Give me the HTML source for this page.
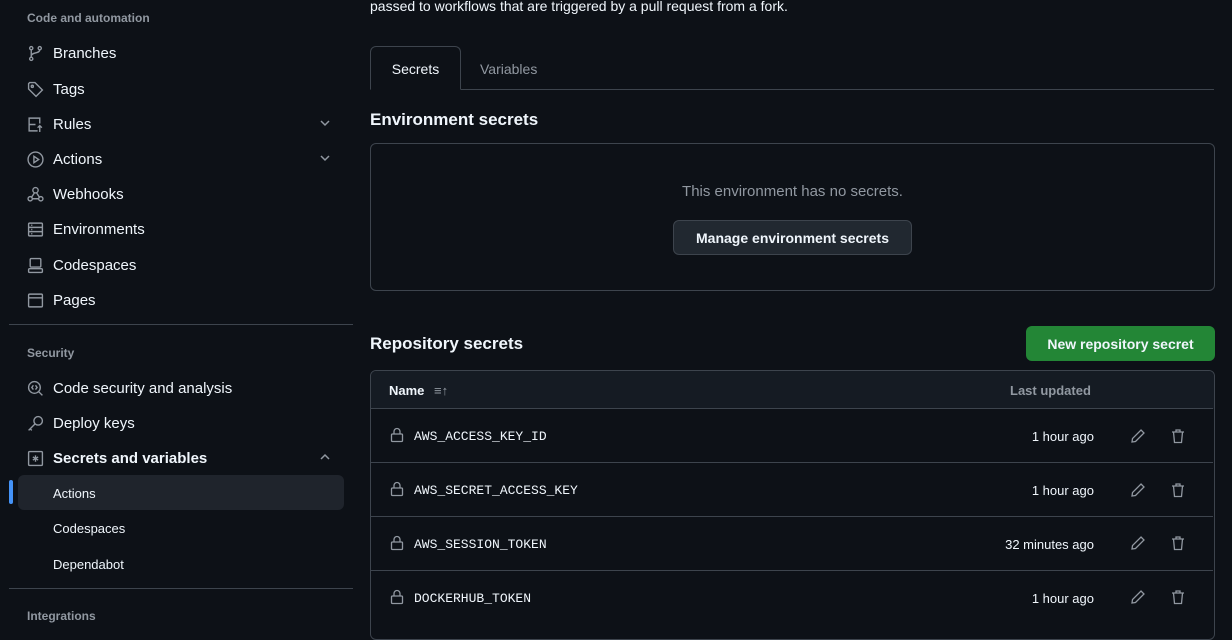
<!DOCTYPE html>
<html><head><style>
*{box-sizing:border-box;margin:0;padding:0}
body{width:1232px;height:635px;overflow:hidden;background:#0d1117;color:#f0f6fc;font-family:"Liberation Sans",sans-serif;font-size:14px;position:relative}
.a{position:absolute}
.h{color:#9198a1;font-size:12px;font-weight:bold}
.it{position:absolute;left:27px;display:flex;align-items:center;font-size:15px;color:#f0f6fc}
.it svg{width:17px;height:17px;flex-shrink:0;margin-right:9px;stroke:#9198a1;fill:none;stroke-width:1.3}
.sub{position:absolute;left:53px;font-size:13px}
.chev{position:absolute;left:318px;width:14px;height:14px;stroke:#9198a1;fill:none;stroke-width:1.5}
.row{position:absolute;left:371px;width:842px;height:54px;border-top:1px solid #3d444d;display:flex;align-items:center;padding-top:2px}
.mono{font-family:"Liberation Mono",monospace;font-size:13px;margin-left:8px}
.time{position:absolute;right:119px;font-size:13px}
.ico{position:absolute;width:16px;height:16px;stroke:#9198a1;fill:none;stroke-width:1.3}
</style></head><body>
<div class="a h" style="left:27px;top:11px">Code and automation</div>
<div class="it" style="top:45px"><svg viewBox="0 0 16 16"><circle cx="4" cy="3" r="1.5"/><circle cx="4" cy="13" r="1.5"/><circle cx="12" cy="3" r="1.5"/><path d="M4 4.5v7M12 4.5c0 4-8 2-8 6"/></svg>Branches</div>
<div class="it" style="top:81px"><svg viewBox="0 0 16 16"><path d="M1.5 2.5v5l7 7 6-6-7-7h-5z"/><circle cx="5" cy="5" r="1"/></svg>Tags</div>
<div class="it" style="top:116px"><svg viewBox="0 0 16 16"><path d="M10 14H2V2h10v5M2 8h6M12 15V9M10 11l2-2 2 2"/></svg>Rules</div>
<svg class="chev" style="top:116px" viewBox="0 0 14 14"><path d="M3 5l4 4 4-4"/></svg>
<div class="it" style="top:151px"><svg viewBox="0 0 16 16"><circle cx="8" cy="8" r="7"/><path d="M6.5 5v6l4.5-3z"/></svg>Actions</div>
<svg class="chev" style="top:151px" viewBox="0 0 14 14"><path d="M3 5l4 4 4-4"/></svg>
<div class="it" style="top:186px"><svg viewBox="0 0 16 16"><circle cx="8" cy="4" r="2.5"/><circle cx="3" cy="12" r="2"/><circle cx="13" cy="12" r="2"/><path d="M7 6.5L4 11M9 6.5L12 11M5 12h6"/></svg>Webhooks</div>
<div class="it" style="top:221px"><svg viewBox="0 0 16 16"><rect x="1.5" y="2" width="13" height="12" rx="1"/><path d="M1.5 6h13M1.5 10h13M4 4h1M4 8h1M4 12h1"/></svg>Environments</div>
<div class="it" style="top:257px"><svg viewBox="0 0 16 16"><rect x="3" y="1.5" width="10" height="8" rx="1"/><rect x="1.5" y="11" width="13" height="3.5" rx="1"/></svg>Codespaces</div>
<div class="it" style="top:292px"><svg viewBox="0 0 16 16"><rect x="1.5" y="2" width="13" height="12" rx="1"/><path d="M1.5 5.5h13"/></svg>Pages</div>
<div class="a" style="left:9px;top:324px;width:344px;height:1px;background:#3d444d"></div>
<div class="a h" style="left:27px;top:346px">Security</div>
<div class="it" style="top:380px"><svg viewBox="0 0 16 16"><circle cx="7" cy="7" r="5.5"/><path d="M11 11l3.5 3.5M6 5L4.5 7 6 9M8 5l1.5 2L8 9"/></svg>Code security and analysis</div>
<div class="it" style="top:415px"><svg viewBox="0 0 16 16"><circle cx="10.5" cy="5.5" r="4"/><path d="M7.5 8.5l-6 6M3 13l1.5 1.5"/></svg>Deploy keys</div>
<div class="it" style="top:450px;font-weight:bold"><svg viewBox="0 0 16 16"><rect x="1.5" y="1.5" width="13" height="13" rx="1"/><path d="M8 5v6M5.5 6.5l5 3M10.5 6.5l-5 3"/></svg>Secrets and variables</div>
<svg class="chev" style="top:450px" viewBox="0 0 14 14"><path d="M3 9l4-4 4 4"/></svg>
<div class="a" style="left:18px;top:475px;width:326px;height:35px;background:#1f242c;border-radius:6px"></div>
<div class="a" style="left:9px;top:480px;width:4px;height:24px;background:#4493f8;border-radius:3px"></div>
<div class="sub" style="top:486px">Actions</div>
<div class="sub" style="top:521px">Codespaces</div>
<div class="sub" style="top:557px">Dependabot</div>
<div class="a" style="left:9px;top:588px;width:344px;height:1px;background:#3d444d"></div>
<div class="a h" style="left:27px;top:609px">Integrations</div>

<div class="a" style="left:370px;top:-2px;font-size:14px">passed to workflows that are triggered by a pull request from a fork.</div>
<div class="a" style="left:370px;top:89px;width:844px;height:1px;background:#3d444d"></div>
<div class="a" style="left:370px;top:46px;width:91px;height:44px;border:1px solid #3d444d;border-bottom:1px solid #0d1117;border-radius:6px 6px 0 0;background:#0d1117;text-align:center;line-height:44px">Secrets</div>
<div class="a" style="left:480px;top:61px;color:#9198a1">Variables</div>
<div class="a" style="left:370px;top:110px;font-size:17px;font-weight:bold">Environment secrets</div>
<div class="a" style="left:370px;top:143px;width:845px;height:148px;border:1px solid #3d444d;border-radius:6px"></div>
<div class="a" style="left:370px;top:183px;width:845px;text-align:center;color:#9198a1;font-size:15px">This environment has no secrets.</div>
<div class="a" style="left:673px;top:220px;width:239px;height:35px;background:#212830;border:1px solid #3d444d;border-radius:6px;text-align:center;line-height:34px;font-size:14px;font-weight:bold">Manage environment secrets</div>
<div class="a" style="left:370px;top:334px;font-size:17px;font-weight:bold">Repository secrets</div>
<div class="a" style="left:1026px;top:326px;width:189px;height:35px;background:#238636;border-radius:6px;text-align:center;line-height:36px;font-weight:bold;font-size:14px">New repository secret</div>
<div class="a" style="left:370px;top:370px;width:845px;height:270px;border:1px solid #3d444d;border-radius:6px;overflow:hidden">
<div style="height:38px;background:#151b23"></div></div>
<div class="a" style="left:389px;top:383px;font-size:13px;font-weight:bold">Name <span style="color:#9198a1;font-weight:normal;margin-left:6px">&#8801;&#8593;</span></div>
<div class="a" style="left:1010px;top:383px;font-size:13px;color:#9198a1;font-weight:bold">Last updated</div>
<div class="row" style="top:408px"><svg class="ico" style="left:18px;top:18px" viewBox="0 0 16 16"><rect x="2.5" y="7" width="11" height="7.5" rx="1"/><path d="M5 7V4.5a3 3 0 016 0V7"/></svg><span class="mono" style="margin-left:43px">AWS_ACCESS_KEY_ID</span><span class="time">1 hour ago</span></div>
<div class="row" style="top:462px"><svg class="ico" style="left:18px;top:18px" viewBox="0 0 16 16"><rect x="2.5" y="7" width="11" height="7.5" rx="1"/><path d="M5 7V4.5a3 3 0 016 0V7"/></svg><span class="mono" style="margin-left:43px">AWS_SECRET_ACCESS_KEY</span><span class="time">1 hour ago</span></div>
<div class="row" style="top:516px"><svg class="ico" style="left:18px;top:18px" viewBox="0 0 16 16"><rect x="2.5" y="7" width="11" height="7.5" rx="1"/><path d="M5 7V4.5a3 3 0 016 0V7"/></svg><span class="mono" style="margin-left:43px">AWS_SESSION_TOKEN</span><span class="time">32 minutes ago</span></div>
<div class="row" style="top:570px"><svg class="ico" style="left:18px;top:18px" viewBox="0 0 16 16"><rect x="2.5" y="7" width="11" height="7.5" rx="1"/><path d="M5 7V4.5a3 3 0 016 0V7"/></svg><span class="mono" style="margin-left:43px">DOCKERHUB_TOKEN</span><span class="time">1 hour ago</span></div>
<svg class="ico" style="left:1130px;top:428px" viewBox="0 0 16 16"><path d="M11 2l3 3-8.5 8.5L2 14l.5-3.5z"/></svg>
<svg class="ico" style="left:1170px;top:428px" viewBox="0 0 16 16"><path d="M2 4h12M6 4V2h4v2M3.5 4l1 10.5h7l1-10.5"/></svg>
<svg class="ico" style="left:1130px;top:482px" viewBox="0 0 16 16"><path d="M11 2l3 3-8.5 8.5L2 14l.5-3.5z"/></svg>
<svg class="ico" style="left:1170px;top:482px" viewBox="0 0 16 16"><path d="M2 4h12M6 4V2h4v2M3.5 4l1 10.5h7l1-10.5"/></svg>
<svg class="ico" style="left:1130px;top:535px" viewBox="0 0 16 16"><path d="M11 2l3 3-8.5 8.5L2 14l.5-3.5z"/></svg>
<svg class="ico" style="left:1170px;top:535px" viewBox="0 0 16 16"><path d="M2 4h12M6 4V2h4v2M3.5 4l1 10.5h7l1-10.5"/></svg>
<svg class="ico" style="left:1130px;top:589px" viewBox="0 0 16 16"><path d="M11 2l3 3-8.5 8.5L2 14l.5-3.5z"/></svg>
<svg class="ico" style="left:1170px;top:589px" viewBox="0 0 16 16"><path d="M2 4h12M6 4V2h4v2M3.5 4l1 10.5h7l1-10.5"/></svg>
</body></html>
